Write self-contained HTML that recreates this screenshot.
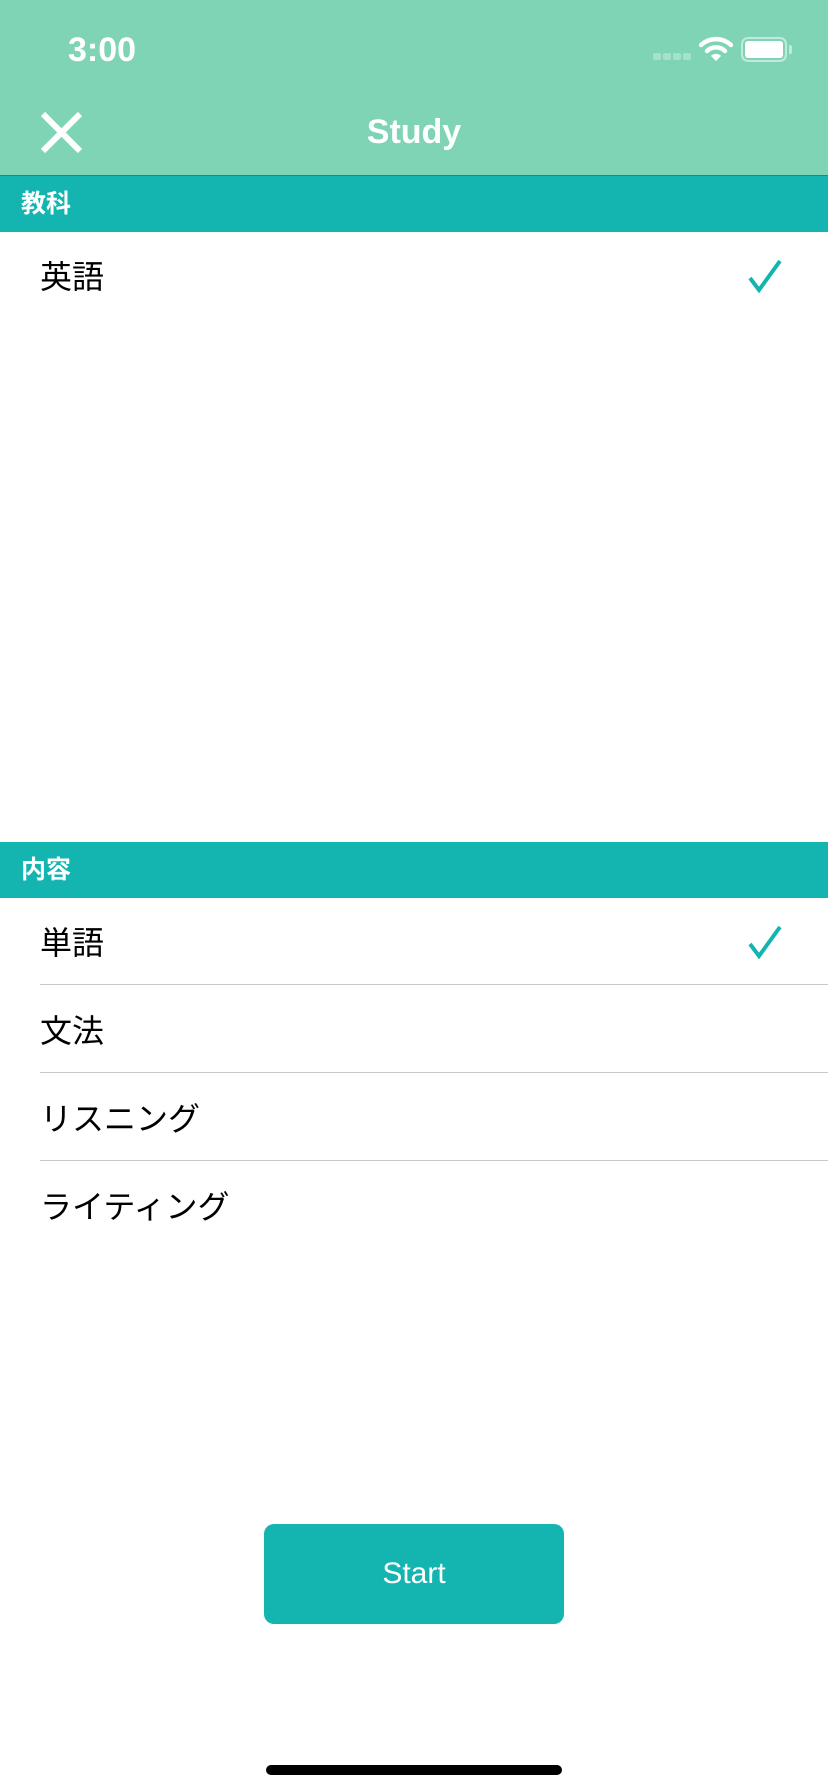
<!DOCTYPE html>
<html><head><meta charset="utf-8"><style>
*{margin:0;padding:0;box-sizing:border-box}
body{width:828px;height:1792px;position:relative;background:#fff;font-family:"Liberation Sans","Noto Sans CJK JP",sans-serif;overflow:hidden}
.nav{position:absolute;left:0;top:0;width:828px;height:176px;background:#80d4b6;border-bottom:1px solid #1c8c80}
.abs{position:absolute}
.sec{position:absolute;left:0;width:828px;height:56px;background:#14b5b0;color:#fff;font-weight:bold;font-size:25px;line-height:56px;padding-left:21px}
.row{position:absolute;left:40px;font-size:32px;color:#000}
.sep{position:absolute;left:40px;right:0;height:1px;background:#c8c8c8}
</style></head><body>
<div class="nav"></div>
<div class="abs" style="left:68px;top:29px;font-size:34px;color:#fff;line-height:42px;font-weight:600">3:00</div>
<div class="abs" style="left:653px;top:53px;width:8px;height:7px;border-radius:2px;background:rgba(255,255,255,.3)"></div>
<div class="abs" style="left:663px;top:53px;width:8px;height:7px;border-radius:2px;background:rgba(255,255,255,.3)"></div>
<div class="abs" style="left:673px;top:53px;width:8px;height:7px;border-radius:2px;background:rgba(255,255,255,.3)"></div>
<div class="abs" style="left:683px;top:53px;width:8px;height:7px;border-radius:2px;background:rgba(255,255,255,.3)"></div>
<svg class="abs" style="left:699px;top:36px" width="34" height="26" viewBox="0 0 34 26"><path d="M2 9 A22 22 0 0 1 32 9" stroke="#fff" stroke-width="4.5" fill="none" stroke-linecap="round"/><path d="M8 15 A13 13 0 0 1 26 15" stroke="#fff" stroke-width="4.5" fill="none" stroke-linecap="round"/><path d="M12 20 L17 25 L22 20 A7 7 0 0 0 12 20Z" fill="#fff"/></svg>
<div class="abs" style="left:741px;top:37px;width:46px;height:25px;border:2px solid rgba(255,255,255,.5);border-radius:7px"></div>
<div class="abs" style="left:745px;top:41px;width:38px;height:17px;background:#fff;border-radius:3px"></div>
<div class="abs" style="left:789px;top:45px;width:3px;height:9px;background:rgba(255,255,255,.5);border-radius:0 2px 2px 0"></div>
<svg class="abs" style="left:40px;top:111px" width="43" height="43" viewBox="0 0 43 43"><path d="M3 3L40 40M40 3L3 40" stroke="#fff" stroke-width="6"/></svg>
<div class="abs" style="left:0;width:828px;top:110px;text-align:center;color:#fff;font-weight:bold;font-size:34px;line-height:44px">Study</div>
<div class="sec" style="top:176px">教科</div>
<div class="row" style="top:257px;line-height:40px">英語</div>
<svg class="abs" style="left:748px;top:259px" width="34" height="34" viewBox="0 0 34 34"><path d="M2 19L11 31L32 2" stroke="#14b5b0" stroke-width="4" fill="none"/></svg>
<div class="sec" style="top:842px">内容</div>
<div class="row" style="top:923px;line-height:40px">単語</div>
<svg class="abs" style="left:748px;top:925px" width="34" height="34" viewBox="0 0 34 34"><path d="M2 19L11 31L32 2" stroke="#14b5b0" stroke-width="4" fill="none"/></svg>
<div class="sep" style="top:984px"></div>
<div class="row" style="top:1011px;line-height:40px">文法</div>
<div class="sep" style="top:1072px"></div>
<div class="row" style="top:1099px;line-height:40px">リスニング</div>
<div class="sep" style="top:1160px"></div>
<div class="row" style="top:1187px;line-height:40px">ライティング</div>
<div class="abs" style="left:264px;top:1524px;width:300px;height:100px;background:#14b5b0;border-radius:10px;color:#fff;font-size:30px;text-align:center;line-height:100px">Start</div>
<div class="abs" style="left:266px;top:1765px;width:296px;height:10px;background:#000;border-radius:5px"></div>
</body></html>
